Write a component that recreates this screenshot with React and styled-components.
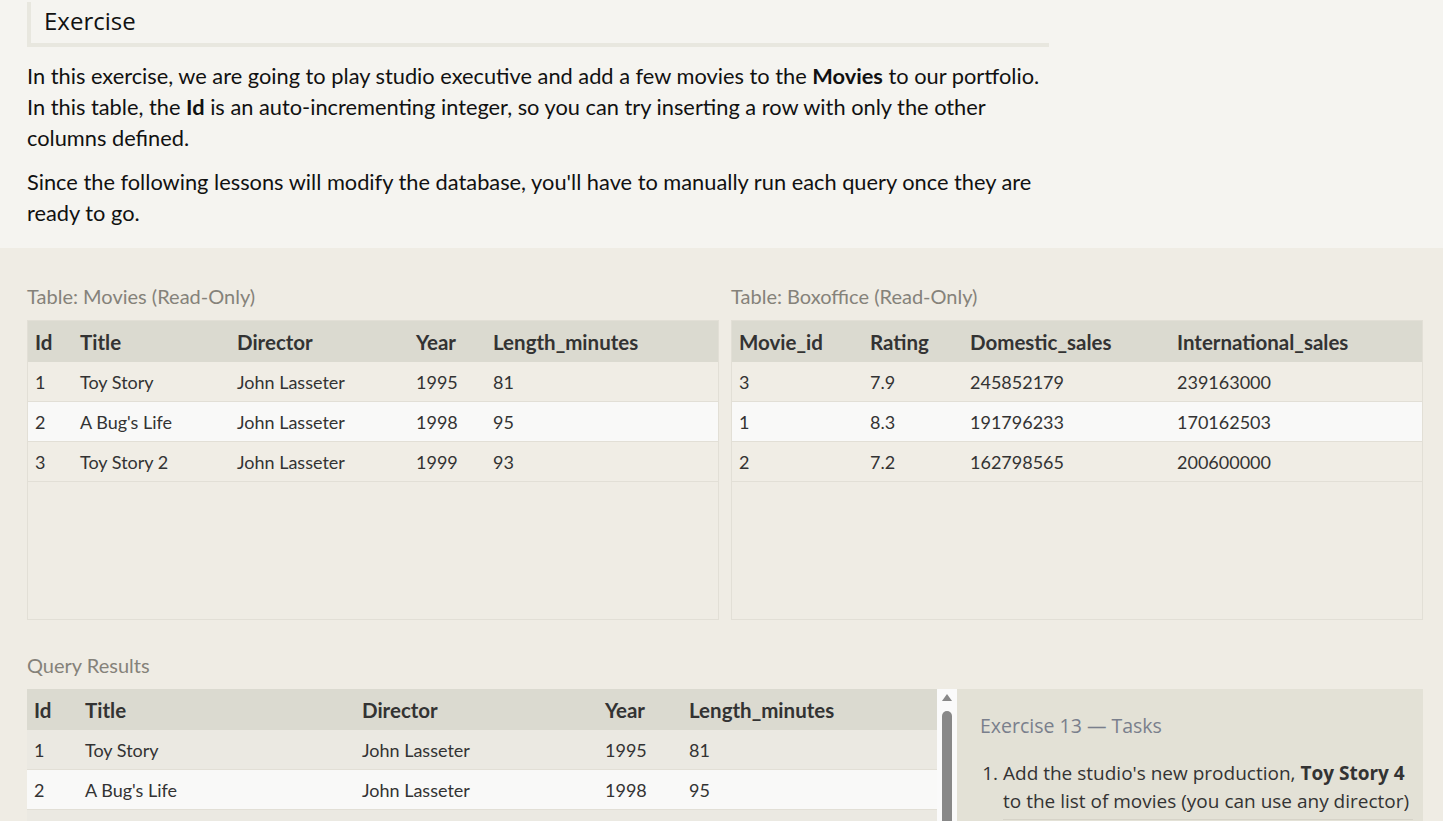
import React from "react";
import styled, { createGlobalStyle } from "styled-components";

const GlobalStyle = createGlobalStyle`
  html, body {
    margin: 0;
    padding: 0;
    background: #efece4;
    overflow: hidden;
  }
`;

const Page = styled.div`
  font-family: Lato, "Open Sans", sans-serif;
  color: #111;
`;

const Intro = styled.section`
  background: #f5f4f0;
  padding: 2px 0 7px 27px;
`;

const IntroInner = styled.div`
  width: 1022px;
`;

const Heading = styled.h2`
  margin: 0 0 13px;
  padding: 4px 13px 7px;
  border-left: 4px solid #e8e7df;
  border-bottom: 4px solid #e8e7df;
  font-family: "Open Sans", sans-serif;
  font-weight: 400;
  font-size: 24px;
  line-height: 30px;
  color: #111;
`;

const Para = styled.p`
  margin: 0 0 13px;
  max-width: 1016px;
  font-size: 21.8px;
  line-height: 31px;
`;

const Work = styled.section`
  background: #efece4;
  padding: 36px 20px 0 27px;
`;

const TablesRow = styled.div`
  display: grid;
  grid-template-columns: 1fr 1fr;
  gap: 12px;
`;

const Label = styled.div`
  font-size: 20px;
  line-height: 24px;
  color: #85827a;
  margin-bottom: 12px;
  margin-top: ${(p) => p.$top || 0}px;
`;

const TableBox = styled.div`
  border: 1px solid #e2dfd6;
  height: ${(p) => p.$height}px;
  box-sizing: border-box;
  overflow: hidden;
`;

const Table = styled.table`
  width: 100%;
  table-layout: fixed;
  border-collapse: collapse;
  font-size: 18px;
  color: #333;
`;

const Th = styled.th`
  box-sizing: border-box;
  text-align: left;
  font-weight: 700;
  font-size: 20.5px;
  padding: 0 7px;
  height: 41px;
  background: #dbdad0;
  color: #333;
  white-space: nowrap;
  width: ${(p) => (p.$w ? `${p.$w}px` : "auto")};
`;

const Tr = styled.tr`
  background: ${(p) => (p.$odd ? "#f9f9f8" : p.$base)};
  border-bottom: 1px solid #e2dfd6;
`;

const Td = styled.td`
  padding: 0 7px;
  height: 39px;
  white-space: nowrap;
`;

const Bottom = styled.div`
  display: flex;
  align-items: stretch;
`;

const ResultsCol = styled.div`
  flex: 0 0 910px;
  height: 300px;
  overflow: hidden;
`;

const Scrollbar = styled.div`
  flex: 0 0 20px;
  background: #fafafa;
  display: flex;
  flex-direction: column;
  align-items: center;
  padding-top: 5px;
  gap: 10px;
`;

const Arrow = styled.div`
  width: 0;
  height: 0;
  border-left: 5px solid transparent;
  border-right: 5px solid transparent;
  border-bottom: 7px solid #888;
`;

const Thumb = styled.div`
  width: 10px;
  height: 200px;
  border-radius: 5px;
  background: #888;
`;

const Tasks = styled.div`
  flex: 1;
  background: #e3e1d6;
  padding: 24px 10px 0 23px;
  font-family: "Open Sans", sans-serif;
  color: #333;
`;

const TasksTitle = styled.h3`
  margin: 0 0 20px;
  font-weight: 400;
  font-size: 19.5px;
  line-height: 26px;
  color: #7a7f8c;
`;

const TaskList = styled.ol`
  margin: 0;
  padding-left: 23px;
  font-size: 19px;
  line-height: 28px;
`;

const TaskItem = styled.li`
  padding-bottom: 4px;
  border-bottom: 1px solid #d6d3c8;
`;

const movies = [
  [1, "Toy Story", "John Lasseter", 1995, 81],
  [2, "A Bug's Life", "John Lasseter", 1998, 95],
  [3, "Toy Story 2", "John Lasseter", 1999, 93],
];

const boxoffice = [
  [3, "7.9", 245852179, 239163000],
  [1, "8.3", 191796233, 170162503],
  [2, "7.2", 162798565, 200600000],
];

const DataTable = ({ cols, widths, rows, base }) => (
  <Table>
    <thead>
      <tr>
        {cols.map((c, i) => (
          <Th key={c} $w={widths[i]}>
            {c}
          </Th>
        ))}
      </tr>
    </thead>
    <tbody>
      {rows.map((r, i) => (
        <Tr key={i} $odd={i % 2 === 1} $base={base}>
          {r.map((v, j) => (
            <Td key={j}>{v}</Td>
          ))}
        </Tr>
      ))}
    </tbody>
  </Table>
);

const movieCols = ["Id", "Title", "Director", "Year", "Length_minutes"];

const App = () => {
  return (
    <Page>
      <GlobalStyle />
      <Intro>
        <IntroInner>
          <Heading>Exercise</Heading>
          <Para>
            In this exercise, we are going to play studio executive and add a few
            movies to the <b>Movies</b> to our portfolio. In this table, the{" "}
            <b>Id</b> is an auto-incrementing integer, so you can try inserting a
            row with only the other columns defined.
          </Para>
          <Para>
            Since the following lessons will modify the database, you'll have to
            manually run each query once they are ready to go.
          </Para>
        </IntroInner>
      </Intro>
      <Work>
        <TablesRow>
          <div>
            <Label>Table: Movies (Read-Only)</Label>
            <TableBox $height={300}>
              <DataTable
                cols={movieCols}
                widths={[45, 157, 179, 77]}
                rows={movies}
                base="#f0ede5"
              />
            </TableBox>
          </div>
          <div>
            <Label>Table: Boxoffice (Read-Only)</Label>
            <TableBox $height={300}>
              <DataTable
                cols={["Movie_id", "Rating", "Domestic_sales", "International_sales"]}
                widths={[131, 100, 207]}
                rows={boxoffice}
                base="#f0ede5"
              />
            </TableBox>
          </div>
        </TablesRow>
        <Label $top={33}>Query Results</Label>
        <Bottom>
          <ResultsCol>
            <DataTable
              cols={movieCols}
              widths={[51, 277, 243, 84]}
              rows={movies}
              base="#ebe9e2"
            />
          </ResultsCol>
          <Scrollbar>
            <Arrow />
            <Thumb />
          </Scrollbar>
          <Tasks>
            <TasksTitle>Exercise 13 — Tasks</TasksTitle>
            <TaskList>
              <TaskItem>
                Add the studio's new production, <b>Toy Story 4</b> to the list of
                movies (you can use any director)
              </TaskItem>
            </TaskList>
          </Tasks>
        </Bottom>
      </Work>
    </Page>
  );
};

export default App;
